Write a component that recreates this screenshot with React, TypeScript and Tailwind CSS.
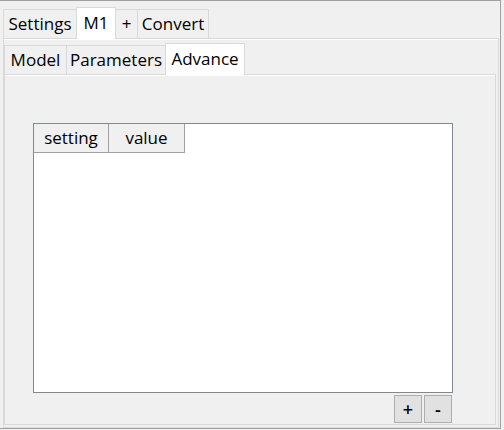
import React from 'react';

const font = { fontFamily: '"Open Sans", "Noto Sans", sans-serif' };

const Tab: React.FC<{ label: string; active?: boolean; width: string }> = ({ label, active, width }) => (
  <div
    className={`${width} flex items-center justify-center border border-b-0 border-[#d9d9d9] text-[17px] text-black leading-none ${
      active ? 'h-[32px] bg-white -mb-px z-10 pb-[3px]' : 'h-[29px] bg-[#f0f0f0] pb-[1px]'
    } -ml-px first:ml-0`}
  >
    {label}
  </div>
);

export default function App() {
  return (
    <div className="w-[504px] h-[430px] bg-[#f0f0f0]" style={font}>
      <div className="w-[501px] h-[429px] border-t border-r border-b border-[#a0a0a0] pt-[6px] pl-[3px] flex flex-col">
        {/* top tabs */}
        <div className="h-[31px] flex items-end shrink-0">
          <Tab label="Settings" width="w-[74px]" />
          <Tab label="M1" width="w-[40px]" active />
          <Tab label="+" width="w-[23px]" />
          <Tab label="Convert" width="w-[72px]" />
        </div>
        <div className="w-[496px] h-[390px] border border-[#d9d9d9] bg-[#f0f0f0] shadow-[inset_0_1px_0_#fff] pt-[4px] flex flex-col">
          {/* inner tabs */}
          <div className="h-[31px] flex items-end shrink-0">
            <Tab label="Model" width="w-[63px]" />
            <Tab label="Parameters" width="w-[100px]" />
            <Tab label="Advance" width="w-[80px]" active />
          </div>
          <div className="w-[492px] h-[351px] border border-[#d9d9d9] shadow-[inset_0_1px_0_#fff] pl-[28px] pt-[48px] flex flex-col">
            <div className="w-[420px] h-[270px] border border-[#828790] bg-white">
              <div className="flex h-[29px] text-[17px] text-black">
                <div className="w-[75px] border-r border-b border-[#a0a0a0] bg-[#f0f0f0] flex items-center justify-center pb-[1px]">
                  setting
                </div>
                <div className="w-[76px] border-r border-b border-[#a0a0a0] bg-[#f0f0f0] flex items-center justify-center pb-[1px]">
                  value
                </div>
              </div>
            </div>
            <div className="flex gap-[2px] w-[419px] justify-end mt-[2px]">
              <button className="w-[28px] h-[28px] bg-[#e1e1e1] border border-[#adadad] flex items-center justify-center text-[18px] font-semibold text-black leading-none">
                +
              </button>
              <button className="w-[28px] h-[28px] bg-[#e1e1e1] border border-[#adadad] flex items-center justify-center text-[18px] font-semibold text-black leading-none">
                -
              </button>
            </div>
          </div>
        </div>
      </div>
    </div>
  );
}
